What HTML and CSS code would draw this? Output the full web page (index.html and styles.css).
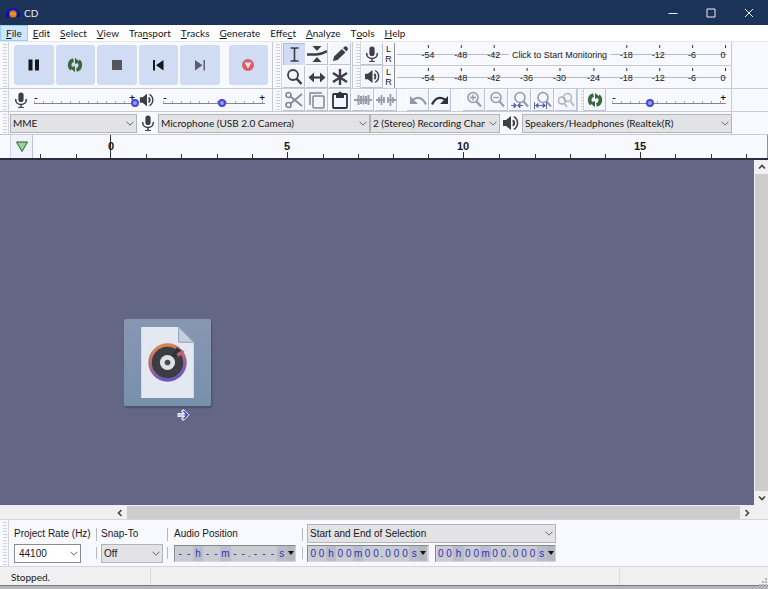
FILE: index.html
```html
<!DOCTYPE html>
<html lang="en">
<head>
<meta charset="utf-8">
<title>CD</title>
<link rel="stylesheet" href="styles.css">
</head>
<body>
<svg class="defs" aria-hidden="true">
  <symbol id="mic" viewBox="0 0 16 16"><rect x="5.4" y="0.5" width="5.2" height="9.6" rx="2.6" fill="#3d3f45"/><path d="M2.7 7v1a5.3 4.4 0 0 0 10.6 0V7M8 12.4v3" fill="none" stroke="#3d3f45" stroke-width="1.5"/><path d="M5 15.4h6" stroke="#3d3f45"/></symbol>
  <symbol id="speaker" viewBox="0 0 18 16"><path d="M1 5h3l5-4v14l-5-4H1z" fill="#3d3f45"/><path d="M11 5.2q2.2 2.8 0 5.6" fill="none" stroke="#3d3f45" stroke-width="2"/><path d="M11.8 1.6c5 3 5 9.800 0 12.800" fill="none" stroke="#3d3f45" stroke-width="1.5"/></symbol>
  <symbol id="loop" viewBox="0 0 16 16"><g fill="none" stroke="#39683f" stroke-width="3.6"><path d="M6.500 3A5.200 5.200 0 0 0 4.500 12"/><path d="M9.500 13A5.200 5.200 0 0 0 11.500 4"/></g><path d="M2.500 10.200l5.500-1v6zM13.500 5.800l-5.500 1v-6z" fill="#39683f"/></symbol>
  <symbol id="lens" viewBox="0 0 20 20"><circle cx="9" cy="7.500" r="5" fill="none" stroke="currentColor" stroke-width="1.600"/><path d="M12.500 11.500l4.500 5" stroke="currentColor" stroke-width="2.200"/></symbol>
  <symbol id="chevron" viewBox="0 0 8 5"><path d="M.5 .7L4 4.200 7.500 .7" fill="none" stroke="#666" stroke-width="1"/></symbol>
</svg>

<header class="titlebar">
  <svg class="logo" viewBox="0 0 14 12"><path d="M1.500 9V6a5.500 4.500 0 0 1 11 0v3" fill="none" stroke="#1111c8" stroke-width="1.600"/><circle cx="7" cy="7" r="3.600" fill="#e5782c"/><path d="M4 7h6" stroke="#f4b03a"/><rect x="0" y="5.500" width="3" height="5" rx="1" fill="#0b0bb8"/><rect x="11" y="5.500" width="3" height="5" rx="1" fill="#0b0bb8"/></svg>
  <span class="title">CD</span>
  <div class="window-buttons">
    <button aria-label="Minimize"><svg viewBox="0 0 10 10"><path d="M.5 5.500h9"/></svg></button>
    <button aria-label="Maximize"><svg viewBox="0 0 10 10"><path d="M1 1h8v8H1z"/></svg></button>
    <button aria-label="Close"><svg viewBox="0 0 10 10"><path d="M1 1l8 8M9 1L1 9"/></svg></button>
  </div>
</header>

<nav class="menubar">
  <button class="open"><u>F</u>ile</button><button><u>E</u>dit</button><button><u>S</u>elect</button><button><u>V</u>iew</button><button>Tra<u>n</u>sport</button><button><u>T</u>racks</button><button><u>G</u>enerate</button><button>Effe<u>c</u>t</button><button><u>A</u>nalyze</button><button>T<u>o</u>ols</button><button><u>H</u>elp</button>
</nav>

<section class="dock">
  <div class="dock-row main-row">
    <div class="bar transport">
      <i class="grip"></i>
      <div class="transport-buttons">
        <button aria-label="Pause"><svg viewBox="0 0 16 16"><path d="M2.500 2.500h4v11h-4zM9 2.500h4v11H9z" fill="#15171c"/></svg></button>
        <button aria-label="Play"><svg viewBox="0 0 16 16"><use href="#loop"/></svg></button>
        <button aria-label="Stop"><svg viewBox="0 0 16 16"><path d="M3 3h10v10H3z" fill="#54565d"/></svg></button>
        <button aria-label="Skip to Start"><svg viewBox="0 0 16 16"><path d="M3 3h2v10.500H3zM13.500 3v10.500L6 8.200z" fill="#15171c"/></svg></button>
        <button aria-label="Skip to End"><svg viewBox="0 0 16 16"><path d="M11.500 3H13v10.500h-1.500zM3 3v10.500l7.500-5.300z" fill="#5c6070"/></svg></button>
        <button class="record" aria-label="Record"><svg viewBox="0 0 16 16"><circle cx="8" cy="8" r="6" fill="#db5c66"/><path d="M4.500 5.500h7L8 11.500z" fill="#f5e6ee"/></svg></button>
      </div>
    </div>
    <div class="bar tools">
      <i class="grip"></i>
      <div class="tool-grid">
        <button class="tool on" aria-label="Selection Tool"><svg viewBox="0 0 20 20"><path d="M6.500 4h3l1 .7 1-.7h3M10.500 4.500v12M6.500 17h3l1-.7 1 .7h3" fill="none" stroke="#3d3f45" stroke-width="1.600"/></svg></button>
        <button class="tool" aria-label="Envelope Tool"><svg viewBox="0 0 20 20"><path d="M0 10.500h9q6 0 11-3.500" fill="none" stroke="#3d3f45" stroke-width="2.600"/><path d="M5.500 2h9l-4.500 5zM5.500 18h9l-4.500-5z" fill="#3d3f45"/></svg></button>
        <button class="tool" aria-label="Draw Tool"><svg viewBox="0 0 20 20"><path d="M3 17l1-4.500L12 5l3.500 3.500-8 7.500zM13 4l1.800-1.600q1.200-.6 2.400.6t.6 2.400L16.500 7.500z" fill="#3d3f45"/></svg></button>
        <button class="tool" aria-label="Zoom Tool"><svg viewBox="0 0 20 20"><circle cx="9" cy="8" r="5" fill="none" stroke="#3d3f45" stroke-width="1.800"/><path d="M12.500 11.500l5 5.500" stroke="#3d3f45" stroke-width="2.600"/></svg></button>
        <button class="tool" aria-label="Time Shift Tool"><svg viewBox="0 0 20 20"><path d="M5 10.500h10" stroke="#3d3f45" stroke-width="2.200"/><path d="M1.500 10.500l5.500-5v10zM18.500 10.500l-5.500-5v10z" fill="#3d3f45"/></svg></button>
        <button class="tool" aria-label="Multi-Tool"><svg viewBox="0 0 20 20"><path d="M10 2v16M3 6l14 9M17 6L3 15" stroke="#3d3f45" stroke-width="2.400"/></svg></button>
      </div>
    </div>
    <div class="meters">
      <div class="bar meter">
        <i class="grip"></i>
        <button class="tool" aria-label="Record Meter"><svg viewBox="0 0 20 20"><use href="#mic" x="2" y="2" width="16" height="16"/></svg></button>
        <span class="channels"><span>L</span><span>R</span></span>
        <svg class="scale" viewBox="0 0 336 22">
          <path class="line" d="M2 11.500h331"/><path class="tick" d="M33.500 2v3M66.500 2v3M99.500 2v3M232.500 2v3M265.500 2v3M298.500 2v3M331.500 2v3"/>
          <path class="gap" d="M114 11.500h102"/>
          <text x="33" y="15">-54</text><text x="66" y="15">-48</text><text x="99" y="15">-42</text><text class="prompt" x="165" y="15">Click to Start Monitoring</text><text x="232" y="15">-18</text><text x="264" y="15">-12</text><text x="298" y="15">-6</text><text x="329" y="15">0</text>
        </svg>
      </div>
      <div class="bar meter">
        <i class="grip"></i>
        <button class="tool" aria-label="Playback Meter"><svg viewBox="0 0 20 20"><use href="#speaker" x="2" y="2" width="17" height="15"/></svg></button>
        <span class="channels"><span>L</span><span>R</span></span>
        <svg class="scale" viewBox="0 0 336 22">
          <path class="line" d="M2 11.500h331"/><path class="tick" d="M33.500 2v3M66.500 2v3M99.500 2v3M132.500 2v3M165.500 2v3M199.500 2v3M232.500 2v3M265.500 2v3M298.500 2v3M331.500 2v3"/>
          <text x="33" y="15">-54</text><text x="66" y="15">-48</text><text x="99" y="15">-42</text><text x="132" y="15">-36</text><text x="165" y="15">-30</text><text x="199" y="15">-24</text><text x="232" y="15">-18</text><text x="264" y="15">-12</text><text x="298" y="15">-6</text><text x="329" y="15">0</text>
        </svg>
      </div>
    </div>
  </div>

  <div class="dock-row">
    <div class="bar mixer">
      <i class="grip"></i>
      <svg class="icon"><use href="#mic"/></svg>
      <label class="slider"><span>-</span><span>+</span><input type="range" aria-label="Recording Volume" min="0" max="100" value="100"></label>
      <svg class="icon wide"><use href="#speaker"/></svg>
      <label class="slider"><span>-</span><span>+</span><input type="range" aria-label="Playback Volume" min="0" max="100" value="58"></label>
    </div>
    <div class="bar edit">
      <i class="grip"></i>
      <div class="tool-row">
        <button class="tool" aria-label="Cut"><svg viewBox="0 0 20 20" fill="none" stroke="#85878f" stroke-width="1.700"><circle cx="4.500" cy="5" r="2.500"/><circle cx="4.500" cy="15" r="2.500"/><path d="M6.500 6.500L18 16M6.500 13.500L18 4"/></svg></button>
        <button class="tool" aria-label="Copy"><svg viewBox="0 0 20 20" fill="none" stroke="#85878f" stroke-width="1.500"><rect x="6" y="6" width="11" height="12" rx="1"/><path d="M3 15V3h12"/></svg></button>
        <button class="tool" aria-label="Paste"><svg viewBox="0 0 20 20"><rect x="3" y="4" width="14" height="14" rx="1" fill="none" stroke="#2f3138" stroke-width="1.800"/><path d="M6 3h2q2-3 4 0h2v5H6z" fill="#2f3138"/></svg></button>
        <button class="tool" aria-label="Trim Audio"><svg viewBox="0 0 20 20" stroke="#9b9da8" stroke-width="1.500"><path d="M1 10h18M5.500 5v10M8 6v8M10.500 5.500v9M13 6v8M15.500 5v10" stroke-width="2"/></svg></button>
        <button class="tool" aria-label="Silence Audio"><svg viewBox="0 0 20 20" stroke="#9b9da8" stroke-width="1.500"><path d="M0 10h9M11 10h9M3 7v6M5.500 5v10M8 7v6M12 7v6M14.500 4v12M17 7v6" stroke-width="1.800"/></svg></button>
      </div>
      <div class="tool-row">
        <button class="tool" aria-label="Undo"><svg viewBox="0 0 20 20"><path d="M5 9.500q8-5 13 5" fill="none" stroke="#9496a0" stroke-width="2"/><path d="M2 6v8h8z" fill="#9496a0"/></svg></button>
        <button class="tool" aria-label="Redo"><svg viewBox="0 0 20 20"><path d="M15 9.500q-8-5-13 5" fill="none" stroke="#2f3138" stroke-width="2.200"/><path d="M18 6v8h-8z" fill="#2f3138"/></svg></button>
      </div>
      <div class="tool-row zooms">
        <button class="tool" aria-label="Zoom In"><svg viewBox="0 0 20 20"><use href="#lens"/><path d="M9 4.500v6M6 7.500h6" stroke="currentColor" stroke-width="1.300"/></svg></button>
        <button class="tool" aria-label="Zoom Out"><svg viewBox="0 0 20 20"><use href="#lens"/><path d="M6 7.500h6" stroke="currentColor" stroke-width="1.300"/></svg></button>
        <button class="tool" aria-label="Fit Selection"><svg viewBox="0 0 20 20"><use href="#lens" x="1"/><path d="M1 15.500h5M9 15.500h4M4 13l2.500 2.500L4 18zM10 13l-2.500 2.500L10 18z" stroke="#5d6bb2" fill="#5d6bb2"/></svg></button>
        <button class="tool" aria-label="Fit Project"><svg viewBox="0 0 20 20"><use href="#lens" x="1"/><path d="M1.500 12v7M13.500 12v7M2 15.500h11M5 13.500l-2.500 2L5 17.500zM10 13.500l2.500 2-2.500 2z" stroke="#5d6bb2" fill="#5d6bb2"/></svg></button>
        <button class="tool" aria-label="Zoom Toggle"><svg viewBox="0 0 20 20" fill="none" stroke="#b0b2bc" stroke-width="1.500"><circle cx="6" cy="10.500" r="3.500"/><circle cx="11.500" cy="7.500" r="4"/><path d="M14.500 11l3.500 5M8 13l3 4"/></svg></button>
      </div>
    </div>
    <div class="bar speed">
      <i class="grip"></i>
      <button class="tool" aria-label="Play-at-Speed"><svg viewBox="0 0 20 20"><use href="#loop" x="2" y="2" width="16" height="16"/></svg></button>
      <label class="slider"><span>-</span><span>+</span><input type="range" aria-label="Playback Speed" min="0" max="100" value="33"></label>
    </div>
  </div>

  <div class="dock-row">
    <div class="bar device">
      <i class="grip"></i>
      <span class="drop host"><select aria-label="Audio Host"><option>MME</option></select><svg><use href="#chevron"/></svg></span>
      <svg class="icon"><use href="#mic"/></svg>
      <span class="drop input-device"><select aria-label="Recording Device"><option>Microphone (USB 2.0 Camera)</option></select><svg><use href="#chevron"/></svg></span>
      <span class="drop channel-count"><select aria-label="Recording Channels"><option>2 (Stereo) Recording Channels</option></select><svg><use href="#chevron"/></svg></span>
      <svg class="icon wide"><use href="#speaker"/></svg>
      <span class="drop output-device"><select aria-label="Playback Device"><option>Speakers/Headphones (Realtek(R)</option></select><svg><use href="#chevron"/></svg></span>
    </div>
  </div>
</section>

<section class="timeline">
  <button class="pin" aria-label="Pinned Play Head"><svg viewBox="0 0 14 12"><path d="M1.500 1h11L7 10.500z" fill="#8fd98c" stroke="#35573b"/></svg></button>
  <svg class="ruler">
    <path d="M7.500 19v4M43.500 19v4M113.500 19v4M148.500 19v4M184.500 19v4M219.500 19v4M290.500 19v4M325.500 19v4M360.500 19v4M395.500 19v4M466.500 19v4M502.500 19v4M537.500 19v4M572.500 19v4M642.500 19v4M678.500 19v4M713.500 19v4"/>
    <path d="M77.500 0v23M254.500 17v6M430.500 17v6M607.500 17v6"/>
    <text x="78" y="15">0</text><text x="254" y="15">5</text><text x="430" y="15">10</text><text x="607" y="15">15</text>
  </svg>
</section>

<main class="workspace">
  <div class="tracks">
    <figure class="dragged">
      <svg viewBox="0 0 86 86">
        <path d="M17 8h37l15 15v55H17z" fill="#e4e8f0"/><path d="M54 8l15 15H54z" fill="#c5cfdf" stroke="#8296ad" stroke-width=".8"/>
        <defs><linearGradient id="rim" x1="0" y1="0" x2=".3" y2="1"><stop offset="0" stop-color="#e59042"/><stop offset=".5" stop-color="#b66b78"/><stop offset="1" stop-color="#6b58bc"/></linearGradient></defs>
        <circle cx="43" cy="43" r="19" fill="url(#rim)"/><circle cx="43" cy="43" r="15.500" fill="#3b3d43"/>
        <path d="M44 42L52 28l6 4z" fill="#303238"/><path d="M53 36q4-4 6-3" fill="none" stroke="#bd6377" stroke-width="3.500"/>
        <circle cx="43" cy="43" r="7.500" fill="#dfe1e5"/><circle cx="43" cy="43" r="2.800" fill="#454b55"/>
      </svg>
      <svg class="cursor" viewBox="0 0 12 12"><path d="M0 4h5L3.500 2 6 0l6 6-6 6-2.500-2L5 8H0z" fill="#e3e5f3"/><path d="M1 6h5" stroke="#8b8dbb" stroke-dasharray="1 1"/><path d="M6 2l4 4-4 4M6.500 6H9" fill="none" stroke="#3436b5" stroke-width="1.100"/></svg>
    </figure>
  </div>
  <div class="scroll vertical">
    <button aria-label="Scroll up"><svg viewBox="0 0 8 8"><path d="M1 5.500L4 2.500l3 3"/></svg></button>
    <i></i>
    <button aria-label="Scroll down"><svg viewBox="0 0 8 8"><path d="M1 2.500l3 3 3-3"/></svg></button>
  </div>
  <div class="scroll horizontal">
    <button aria-label="Scroll left"><svg viewBox="0 0 8 8"><path d="M5.500 1l-3 3 3 3"/></svg></button>
    <i></i>
    <button aria-label="Scroll right"><svg viewBox="0 0 8 8"><path d="M2.500 1l3 3-3 3"/></svg></button>
  </div>
</main>

<section class="selection">
  <i class="grip"></i>
  <div class="field rate"><label for="rate">Project Rate (Hz)</label><span class="drop light"><select id="rate"><option>44100</option></select><svg><use href="#chevron"/></svg></span></div>
  <div class="rules"><i></i><i></i></div>
  <div class="field snap"><label for="snap">Snap-To</label><span class="drop"><select id="snap"><option>Off</option></select><svg><use href="#chevron"/></svg></span></div>
  <div class="rules"><i></i><i></i></div>
  <div class="field position"><span class="caption">Audio Position</span>
    <div class="time"><b>-</b><b>-</b><b class="unit">h</b><b>-</b><b>-</b><b class="unit">m</b><b>-</b><b>-</b><b class="dot">.</b><b>-</b><b>-</b><b>-</b><b class="unit">s</b><button aria-label="Audio position format"></button></div>
  </div>
  <div class="rules"><i></i><i></i></div>
  <div class="field range">
    <span class="drop"><select aria-label="Selection Mode"><option>Start and End of Selection</option></select><svg><use href="#chevron"/></svg></span>
    <div class="times">
      <div class="time"><b>0</b><b>0</b><b class="unit">h</b><b>0</b><b>0</b><b class="unit">m</b><b>0</b><b>0</b><b class="dot">.</b><b>0</b><b>0</b><b>0</b><b class="unit">s</b><button aria-label="Selection start format"></button></div>
      <div class="time"><b>0</b><b>0</b><b class="unit">h</b><b>0</b><b>0</b><b class="unit">m</b><b>0</b><b>0</b><b class="dot">.</b><b>0</b><b>0</b><b>0</b><b class="unit">s</b><button aria-label="Selection end format"></button></div>
    </div>
  </div>
</section>

<footer class="status"><span>Stopped.</span><span></span><span></span>
  <svg viewBox="0 0 8 8"><path d="M6 0h2v2H6zM3 3h2v2H3zM6 3h2v2H6zM0 6h2v2H0zM3 6h2v2H3zM6 6h2v2H6z" fill="#b5b5b8"/></svg>
</footer>
</body>
</html>
```
FILE: styles.css
```css
* { box-sizing: border-box; }

body {
  margin: 0;
  height: 100vh;
  display: flex;
  flex-direction: column;
  overflow: hidden;
  background: #f8f9fe;
  color: #16171b;
  font: 10px/14px Lato, "Open Sans", sans-serif;
}

button, select { font: inherit; color: inherit; }
button { border: 0; padding: 0; background: none; display: flex; align-items: center; justify-content: center; }
svg { display: block; }
.defs { display: none; }

/* Title bar and menus */
.titlebar { flex: none; height: 25px; display: flex; align-items: center; padding-left: 6px; background: #1c3359; color: #e9edf4; }
.logo { width: 14px; height: 12px; }
.title { margin-left: 4px; }
.window-buttons { display: flex; margin-left: auto; }
.window-buttons button { width: 38px; height: 24px; }
.window-buttons svg { width: 10px; height: 10px; fill: none; stroke: #e9edf4; }

.menubar { flex: none; height: 17px; display: flex; background: #fff; border-bottom: 1px solid #e5e5ea; }
.menubar button { height: 16px; padding: 0 5px; white-space: pre; }
.menubar u { text-underline-offset: 1px; }
.menubar .open { padding: 0 6px; background: #cce8ff; box-shadow: inset 0 0 0 1px #99cef5; }

/* Docked toolbars */
.dock-row { display: flex; height: 23px; border-bottom: 1px solid #c9cad2; }
.dock-row.main-row { height: 47px; }
.bar { display: flex; align-items: center; border-right: 1px solid #c9cad2; }
.grip { flex: none; align-self: stretch; width: 9px; border-right: 1px solid #d4d5dc; background: repeating-linear-gradient(#d0d1d8 0 1px, transparent 1px 3px) 3px 2px / 4px 100% no-repeat; }
.transport, .mixer { width: 273px; flex: none; }
.transport-buttons { display: flex; gap: 2px; width: 254px; margin-left: 5px; }
.transport-buttons button { flex: 1; height: 40px; border-radius: 3px; background: #d0dcf3; }
.transport-buttons .record { margin-left: 7px; }
.transport-buttons svg { width: 16px; height: 16px; }

.tools { width: 80px; }
.tool-grid { display: grid; grid-template-columns: repeat(3, 22px); gap: 1px; margin-left: 1px; }
.tool { flex: none; width: 22px; height: 22px; background: #f4f6fd; box-shadow: inset -1px -1px #b9c4dc, inset 1px 1px #fff; }
.tool.on { background: #d0dcf3; box-shadow: inset 1px 1px #aebcda; }
.tool svg { width: 20px; height: 20px; }

.meters { flex: none; width: 379px; }
.meter { height: 23px; }
.meter + .meter { border-top: 1px solid #c9cad2; }
.meter .grip { width: 8px; }
.channels { width: 11px; text-align: center; font: 9px/10px "Liberation Sans", sans-serif; display: grid; }
.scale { width: 336px; height: 22px; border-left: 1px solid #8e9098; font: 9px "Liberation Sans", sans-serif; }
.scale text { text-anchor: middle; fill: #16171b; }
.line { stroke: #b8bac3; }
.tick { stroke: #333; }
.gap { stroke: #f8f9fe; stroke-width: 3; }

.icon { flex: none; width: 16px; height: 16px; }
.mixer .icon { margin-left: 4px; }
.mixer .icon.wide { margin-left: 0; }
.slider { display: flex; flex-wrap: wrap; justify-content: space-between; width: 108px; margin-left: 4px; padding: 0 4px; font-weight: 700; line-height: 8px; }
.slider input {
  appearance: none;
  width: calc(100% + 8px);
  height: 10px;
  margin: -3px -4px 0;
  background:
    linear-gradient(#85878f, #85878f) 4px 5px / calc(100% - 8px) 1px no-repeat,
    repeating-linear-gradient(90deg, #a5a7ae 0 1px, transparent 1px 9px) 4px 3px / calc(100% - 8px) 2px no-repeat;
}
.slider input::-webkit-slider-thumb { appearance: none; width: 8px; height: 8px; border-radius: 50%; border: 2px solid #4646dc; background: #9a9cee; margin-top: 1px; }
.mixer .slider { width: 109px; margin-left: 1px; }
.mixer .icon.wide + .slider { width: 110px; margin-left: 4px; }
.edit { width: 305px; }
.tool-row { display: flex; gap: 1px; margin-left: 1px; }
.tool-row + .tool-row { margin-left: 10px; gap: 0; }
.tool-row + .zooms { margin-left: 12px; gap: 1px; }
.zooms { color: #999ba5; }
.speed { width: 154px; }
.speed .grip { width: 6px; }
.speed .slider { width: 122px; margin-left: 2px; }

/* Drop-downs */
.drop { position: relative; display: block; height: 19px; }
.drop select { appearance: none; display: block; width: 100%; height: 100%; margin: 0; padding: 0 14px 0 2px; border: 1px solid #b3b4ba; border-radius: 0; background: #e3e3e5; }
.drop svg { position: absolute; right: 3px; top: 7px; width: 8px; height: 5px; pointer-events: none; }
.drop.light select { padding-left: 4px; background: #fff; border-color: #8a8b92; }
.device { width: 732px; }
.device .drop { flex: none; }
.host { width: 127px; margin-left: 1px; }
.device .icon { margin: 0 2px 0 3px; }
.input-device { width: 212px; }
.channel-count { width: 130px; }
.device .icon.wide { width: 18px; margin: 0 2px; }
.output-device { width: 210px; }

/* Ruler */
.timeline { flex: none; display: flex; height: 25px; border-bottom: 2px solid #2c2c40; }
.pin { width: 23px; margin-left: 10px; border-right: 1px solid #b9c4dc; border-left: 1px solid #d4d5dc; background: #eef3fc; }
.pin svg { width: 14px; height: 12px; }
.ruler { flex: 1; height: 23px; border-right: 1px solid #8e9098; font: bold 11px "Liberation Sans", sans-serif; }
.ruler path { stroke: #333; }
.ruler text { text-anchor: middle; fill: #16171b; }

/* Track area and scroll bars */
.workspace { flex: 1; min-height: 0; display: grid; grid-template: 1fr 14px / 1fr 14px; background: #f0f0f2; }
.tracks { background: #646685; position: relative; }
.dragged { position: absolute; left: 124px; top: 159px; width: 87px; height: 87px; margin: 0; border-radius: 2px; background: linear-gradient(#8796b3, #7890ab); box-shadow: 1px 2px 2px #4c4e6c; }
.dragged .cursor { position: absolute; left: 53px; top: 90px; width: 13px; height: 12px; }
.scroll { display: flex; }
.scroll button { flex: none; width: 14px; height: 14px; }
.scroll i { flex: 1; background: #cdcdcd; }
.scroll svg { width: 8px; height: 8px; fill: none; stroke: #444; stroke-width: 1.6; }
.vertical { flex-direction: column; padding-left: 1px; }
.vertical button { width: 13px; }
.horizontal { padding: 1px 0 0 113px; }
.horizontal button { height: 13px; }

/* Selection toolbar */
.selection { flex: none; display: flex; height: 47px; border-top: 1px solid #d4d5dc; font: 10px/17px "Liberation Sans", sans-serif; }
.field { flex: none; display: grid; grid-template-rows: 19px 19px; gap: 1px; align-content: center; align-items: center; }
.field label, .caption { white-space: nowrap; }
.rate { width: 78px; margin-left: 5px; }
.rate .drop { width: 67px; }
.rules { width: 9px; display: grid; gap: 6px; padding: 8px 4px 7px; }
.rules i { border-left: 1px solid #b8b9c0; }
.snap { width: 62px; }
.position { width: 122px; margin: 0 2px; }
.range { width: 249px; }
.times { display: flex; gap: 6px; }
.time { flex: 1; display: flex; height: 17px; border: 1px solid #85878f; border-right-color: #d4d5dc; border-bottom-color: #d4d5dc; background: #d3d4dc; color: #3032b8; line-height: 16px; padding-left: 1px; }
.time b { flex: 9 0 0; font-weight: 400; text-align: center; background: #cbccd2; }
.time .unit { flex-grow: 11; background: #bbbdcb; }
.time .dot { flex-grow: 4; }
.time button { width: 8px; background: #b6b7bf; }
.time button::after { content: ""; border: 3px solid transparent; border-top: 4px solid #111; border-bottom: 0; }

/* Status bar */
.status { flex: none; display: flex; height: 23px; padding: 1px 0; background: #f0f0f0; border-top: 1px solid #d4d5dc; border-bottom: 3px solid #b3b5b8; box-shadow: inset 0 -1px #777a80; line-height: 19px; }
.status span { flex: 469; border-right: 1px solid #dcdcde; }
.status span:first-child { flex: 0 0 151px; padding-left: 11px; }
.status span:nth-of-type(3) { flex: 139; border: 0; }
.status svg { width: 8px; height: 8px; margin: 10px 1px 0 0; }
```
